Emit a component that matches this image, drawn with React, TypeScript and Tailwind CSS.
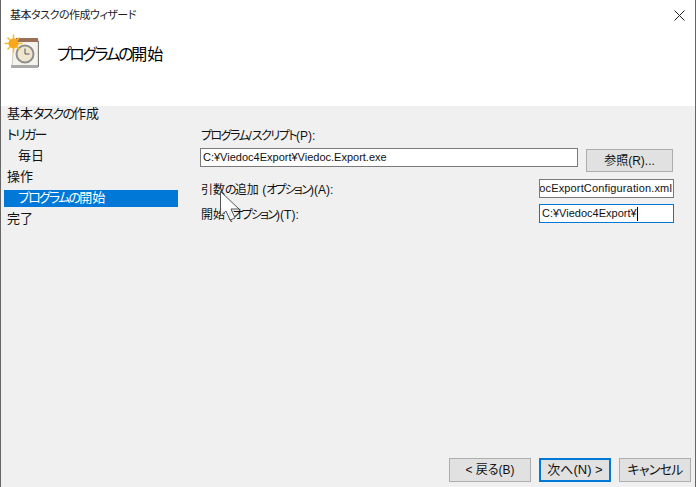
const font = "font-['Liberation_Sans','Noto_Sans_CJK_JP',sans-serif] [font-feature-settings:'palt']";

// the kana in the reference font are much narrower than the kanji
function Jp({ text, kana }: { text: string; kana: string }) {
  const parts = text.split(/([\u30a0-\u30ff\u3040-\u309f]+)/);
  return (
    <>
      {parts.map((p, i) => (i % 2 === 1 ? <span key={i} className={kana}>{p}</span> : <span key={i}>{p}</span>))}
    </>
  );
}

function TaskIcon() {
  return (
    <svg width="36" height="36" viewBox="0 0 36 36" className="absolute left-[3px] top-[34px]">
      <path d="M10 5h24v28H8z" fill="#f6f3ec" stroke="#cfcabd" strokeWidth="1" />
      <rect x="12" y="4" width="22" height="4" fill="#9c6f58" />
      <path d="M7 31h27v3H7z" fill="#a9a9a9" />
      <path d="M34.500 7v26" stroke="#7f7f7f" strokeWidth="1" />
      <circle cx="21" cy="20" r="8.500" fill="#efe6cf" stroke="#8f8f8f" strokeWidth="2" />
      <path d="M21 14.500V20h4.500" stroke="#555" strokeWidth="1" fill="none" />
      <path d="M9.500 0.500v18M0.500 9.500h18M3.500 3.500l12 12M15.500 3.500l-12 12" stroke="#fbb829" strokeWidth="1.500" />
      <circle cx="9.500" cy="9.500" r="5" fill="#f9a81a" />
    </svg>
  );
}

function Cursor() {
  return (
    <svg width="22" height="30" viewBox="0 0 22 30" className="absolute left-[219px] top-[191px]">
      <path d="M0.500 0.500V25L6 20l4 9 5-2-4-9h8z" fill="#fff" fillOpacity="0.85" stroke="#555" strokeWidth="1" />
    </svg>
  );
}

function WinButton({ children, primary, className }: { children: React.ReactNode; primary?: boolean; className: string }) {
  return (
    <div className={`flex items-center justify-center text-[#111] bg-[#e1e1e1] border ${primary ? "border-2 border-[#0078d7]" : "border-[#adadad]"} ${className}`}>
      {children}
    </div>
  );
}

export default function App() {
  const nav = [
    { label: "基本タスクの作成" },
    { label: "トリガー" },
    { label: "毎日", indent: true },
    { label: "操作" },
    { label: "プログラムの開始", indent: true, active: true },
    { label: "完了" },
  ];

  return (
    <div className={`relative w-[696px] h-[487px] overflow-hidden bg-[#f0f0f0] flex flex-col border-x border-[#666] ${font}`}>
      {/* header */}
      <div className="h-[106px] bg-white flex flex-col shrink-0">
        <div className="h-[30px] pt-[1px] flex items-center justify-between pl-[9px] pr-[10px] text-[11px] text-[#222]">
          <span className="tracking-[-0.5px]">基本タスクの作成ウィザード</span>
          <svg width="11" height="11" viewBox="0 0 11 11"><path d="M0.500 0.500l10 10M10.500 0.500l-10 10" stroke="#222" strokeWidth="1" /></svg>
        </div>
        <div className="pl-[56px] mt-[12px] text-[16px] leading-[26px] text-black">
          <Jp text="プログラムの開始" kana="tracking-[-2.4px]" />
        </div>
      </div>
      <TaskIcon />

      <div className="flex flex-1 min-h-0">
        {/* sidebar */}
        <div className="w-[177px] pl-[3px] flex flex-col shrink-0 -mt-[2px] text-[13px] text-[#111]">
          {nav.map((n) => (
            <div key={n.label} className="h-[21px] flex items-center">
              <div className={`w-full h-[17px] leading-[15px] ${n.indent ? "pl-[14px]" : "pl-[3px]"} ${n.active ? "bg-[#0078d7] text-white" : ""}`}>
                <Jp text={n.label} kana="tracking-[-1.800px]" />
              </div>
            </div>
          ))}
        </div>

        {/* form */}
        <div className="flex-1 flex flex-col pl-[22px] pr-[21px] text-[12px] text-[#111]">
          <div className="mt-[22px] pl-[1px] h-[16px] leading-[16px]">
            <Jp text="プログラム/スクリプト(P):" kana="tracking-[-1.500px]" />
          </div>
          <div className="mt-[4px] flex items-start">
            <div className="w-[378px] h-[19px] bg-white border border-[#7a7a7a] px-[2px] leading-[16px] text-[11px]">C:¥Viedoc4Export¥Viedoc.Export.exe</div>
            <WinButton className="ml-[8px] mt-[1px] w-[87px] h-[23px] text-[12px]">参照(R)...</WinButton>
          </div>
          <div className="mt-[7px] flex items-center justify-between h-[19px]">
            <span className="pl-[1px] pt-[2px]"><Jp text="引数の追加 (オプション)(A):" kana="tracking-[-1.800px]" /></span>
            <div className="w-[135px] h-[19px] bg-white border border-[#7a7a7a] text-[11px] tracking-[0.15px] leading-[16px] overflow-hidden flex justify-end pr-[1px] whitespace-nowrap">ocExportConfiguration.xml</div>
          </div>
          <div className="mt-[6px] flex items-center justify-between h-[19px]">
            <span className="pl-[1px] pt-[2px]"><Jp text="開始 (オプション)(T):" kana="tracking-[-1.800px]" /></span>
            <div className="w-[135px] h-[19px] bg-white border border-[#0078d7] text-[11px] leading-[16px] px-[2px] whitespace-nowrap">C:¥Viedoc4Export¥<span className="inline-block w-[1px] h-[14px] bg-black align-middle" /></div>
          </div>
        </div>
      </div>

      {/* footer */}
      <div className="flex justify-end pr-[4px] pb-[5px] shrink-0">
        <WinButton className="w-[82px] h-[24px] text-[12px]">&lt; 戻る(B)</WinButton>
        <WinButton primary className="ml-[8px] w-[72px] h-[24px] text-[13px]">次へ(N) &gt;</WinButton>
        <WinButton className="ml-[8px] w-[72px] h-[24px] text-[13px]"><span className="tracking-[-0.800px]">キャンセル</span></WinButton>
      </div>
      <Cursor />
    </div>
  );
}
